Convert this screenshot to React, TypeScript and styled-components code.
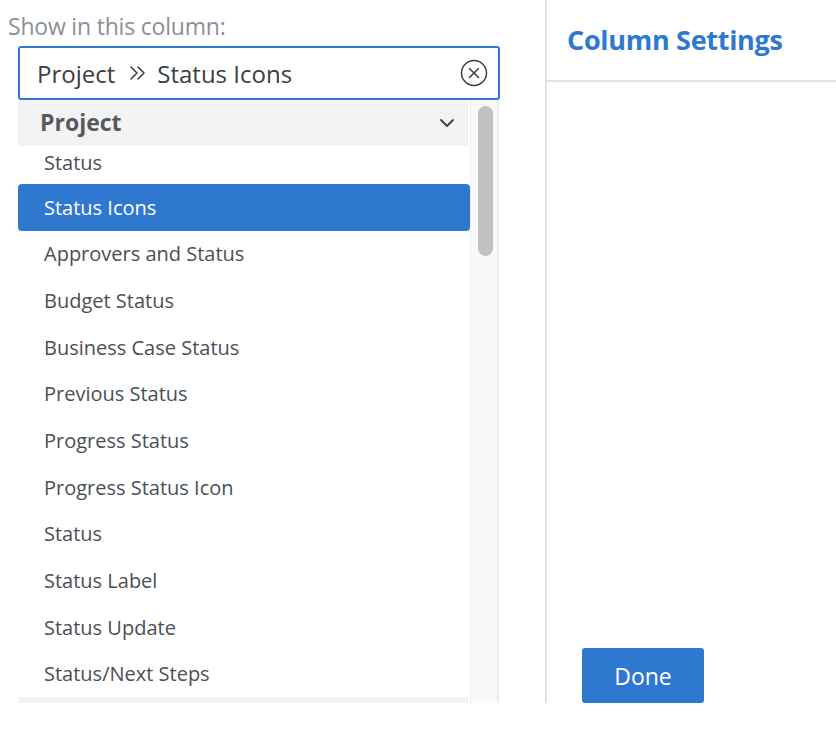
import React from 'react';
import styled, { createGlobalStyle, css } from 'styled-components';

const palette = {
  blue: '#2f78d0',
  text: '#4b4f54',
  dark: '#3a3e43',
  muted: '#8b9095',
  line: '#e3e3e3',
  header: '#f3f3f3',
  track: '#f9f9f9',
  thumb: '#c1c1c1',
};

const GlobalStyle = createGlobalStyle`
  html, body {
    margin: 0;
    padding: 0;
    background: #fff;
    font-family: "Open Sans", "Noto Sans", Arial, sans-serif;
  }
`;

const Page = styled.div`
  display: flex;
  width: 836px;
  height: 703px;
  overflow: hidden;
`;

const LeftPane = styled.div`
  width: 547px;
  flex-shrink: 0;
  display: flex;
  flex-direction: column;
  padding-left: 8px;
  box-sizing: border-box;
  border-right: 2px solid ${palette.line};
`;

const FieldLabel = styled.div`
  height: 46px;
  padding-top: 11px;
  box-sizing: border-box;
  font-size: 23px;
  line-height: 30px;
  color: ${palette.muted};
  letter-spacing: -0.2px;
`;

const PathInput = styled.div`
  margin-left: 10px;
  width: 482px;
  height: 54px;
  box-sizing: border-box;
  border: 2px solid ${palette.blue};
  border-radius: 3px;
  display: flex;
  align-items: center;
  padding: 0 10px 0 17px;
  font-size: 24px;
  color: ${palette.dark};
  .grow {
    flex: 1;
  }
`;

const Separator = styled.svg`
  margin: 0 11px 0 14px;
  flex-shrink: 0;
`;

const ClearButton = styled.button`
  border: none;
  background: none;
  padding: 0;
  display: flex;
  cursor: pointer;
`;

const ListFrame = styled.div`
  margin-left: 10px;
  display: flex;
  flex: 1;
  min-height: 0;
`;

const ListArea = styled.div`
  width: 452px;
  overflow: hidden;
`;

const GroupHeader = styled.div`
  height: 46px;
  margin-right: 2px;
  background: ${palette.header};
  display: flex;
  align-items: center;
  justify-content: space-between;
  padding: 0 13px 0 22px;
  font-size: 23px;
  font-weight: 700;
  color: #555a5f;
  span {
    margin-top: -3px;
  }
`;

const Item = styled.div<{ selected?: boolean; compact?: boolean }>`
  height: ${props => (props.compact ? '38px' : '46.67px')};
  display: flex;
  align-items: center;
  padding-left: 26px;
  box-sizing: border-box;
  font-size: 20px;
  color: ${palette.text};
  border-radius: 4px;
  ${props =>
    props.compact &&
    css`
      padding-bottom: 5px;
    `}
  ${props =>
    props.selected &&
    css`
      background: ${palette.blue};
      color: #fff;
    `}
`;

const ScrollTrack = styled.div`
  width: 29px;
  box-sizing: border-box;
  background: ${palette.track};
  border-left: 1px solid #ececec;
  border-right: 2px solid #ececec;
  padding: 6px 4px 0 7px;
`;

const ScrollThumb = styled.div`
  height: 150px;
  border-radius: 8px;
  background: ${palette.thumb};
`;

const RightPane = styled.div`
  flex: 1;
  display: flex;
  flex-direction: column;
`;

const PaneHeader = styled.div`
  height: 82px;
  box-sizing: border-box;
  border-bottom: 2px solid ${palette.line};
  padding: 23px 0 0 20px;
  font-size: 27px;
  line-height: 34px;
  font-weight: 700;
  color: ${palette.blue};
  letter-spacing: -0.3px;
`;

const PaneFooter = styled.div`
  margin-top: auto;
  padding-left: 35px;
`;

const DoneButton = styled.button`
  width: 122px;
  height: 55px;
  border: none;
  border-radius: 3px;
  background: ${palette.blue};
  color: #fff;
  font-family: inherit;
  font-size: 23px;
  cursor: pointer;
`;

const items = [
  'Approvers and Status',
  'Budget Status',
  'Business Case Status',
  'Previous Status',
  'Progress Status',
  'Progress Status Icon',
  'Status',
  'Status Label',
  'Status Update',
  'Status/Next Steps',
];

const ClearIcon = () => (
  <svg width="28" height="28" viewBox="0 0 28 28">
    <circle cx="14" cy="14" r="12.5" fill="none" stroke="#3a3e43" strokeWidth="1.5" />
    <path d="M9.5 9.5 L18.5 18.5 M18.5 9.5 L9.5 18.5" stroke="#3a3e43" strokeWidth="1.5" strokeLinecap="round" />
  </svg>
);

const DoubleChevron = () => (
  <Separator width="17" height="16" viewBox="0 0 17 16">
    <path
      d="M2 2 L8 8 L2 14 M9 2 L15 8 L9 14"
      fill="none"
      stroke="#3a3e43"
      strokeWidth="1.6"
      strokeLinecap="round"
      strokeLinejoin="round"
    />
  </Separator>
);

const ChevronDown = () => (
  <svg width="16" height="10" viewBox="0 0 16 10">
    <path d="M2 2 L8 8 L14 2" fill="none" stroke="#3a3e43" strokeWidth="1.8" strokeLinecap="round" strokeLinejoin="round" />
  </svg>
);

const App: React.FC = () => {
  return (
    <>
      <GlobalStyle />
      <Page>
        <LeftPane>
          <FieldLabel>Show in this column:</FieldLabel>
          <PathInput>
            <span>Project</span>
            <DoubleChevron />
            <span className="grow">Status Icons</span>
            <ClearButton aria-label="clear">
              <ClearIcon />
            </ClearButton>
          </PathInput>
          <ListFrame>
            <ListArea>
              <GroupHeader>
                <span>Project</span>
                <ChevronDown />
              </GroupHeader>
              <Item compact>Status</Item>
              <Item selected>Status Icons</Item>
              {items.map((name, i) => (
                <Item key={i}>{name}</Item>
              ))}
              <GroupHeader />
            </ListArea>
            <ScrollTrack>
              <ScrollThumb />
            </ScrollTrack>
          </ListFrame>
        </LeftPane>
        <RightPane>
          <PaneHeader>Column Settings</PaneHeader>
          <PaneFooter>
            <DoneButton>Done</DoneButton>
          </PaneFooter>
        </RightPane>
      </Page>
    </>
  );
};

export default App;
